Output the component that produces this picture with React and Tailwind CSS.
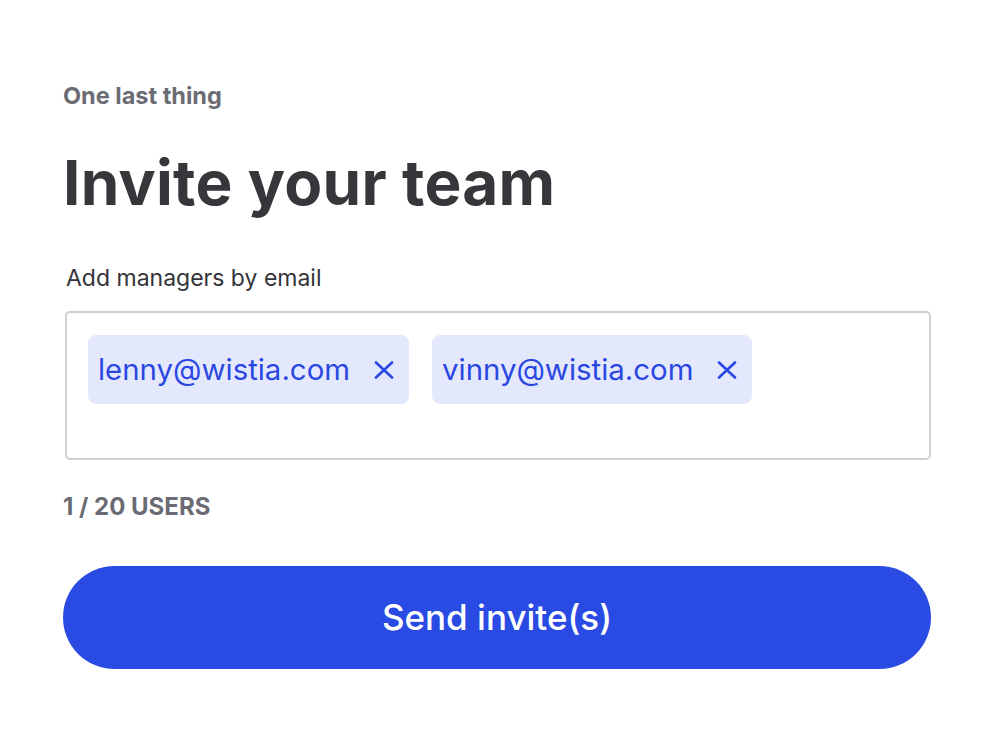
import { useState } from 'react';

const XIcon = () => (
  <svg width="20" height="18" viewBox="0 0 20 18" fill="none" stroke="currentColor" strokeWidth="2.6" strokeLinecap="round">
    <path d="M2 1.5L18 16.5M18 1.5L2 16.5" />
  </svg>
);

const Chip = ({ email, onRemove }) => (
  <div className="flex items-center h-[69px] pl-[10px] pr-[15px] rounded-[8px] bg-[#e4e8fd] text-[#2a47e2]">
    <span className="text-[29.4px] leading-none">{email}</span>
    <button onClick={onRemove} className="ml-[24px] flex items-center text-[#2a47e2]">
      <XIcon />
    </button>
  </div>
);

export default function App() {
  const [emails, setEmails] = useState(['lenny@wistia.com', 'vinny@wistia.com']);

  return (
    <div className="min-h-[748px] w-full bg-white font-['Inter',sans-serif]">
      <div className="pl-[63px] pr-[63px] pt-[83px]">
        <div className="text-[23.5px] font-bold text-[#6b6b74] leading-[26px]">One last thing</div>
        <h1 className="mt-[38px] text-[62px] font-bold text-[#36363b] leading-[72px] tracking-[0.3px]">
          Invite your team
        </h1>

        <div className="mt-[46px] ml-[3px] text-[23px] text-[#333338] leading-[26px]">Add managers by email</div>

        <div className="mt-[20px] ml-[2px] h-[149px] border-2 border-[#cfcfd2] rounded-[5px] px-[21px] pt-[22px]">
          <div className="flex gap-[23px]">
            {emails.map((e) => (
              <Chip key={e} email={e} onRemove={() => setEmails(emails.filter((x) => x !== e))} />
            ))}
          </div>
        </div>

        <div className="mt-[34px] text-[24px] font-bold text-[#6b6b74] leading-[26px]">1 / 20 USERS</div>

        <button className="mt-[46px] w-full h-[103px] rounded-full bg-[#2a4be3] text-white text-[35px] font-medium">
          Send invite(s)
        </button>
      </div>
    </div>
  );
}
